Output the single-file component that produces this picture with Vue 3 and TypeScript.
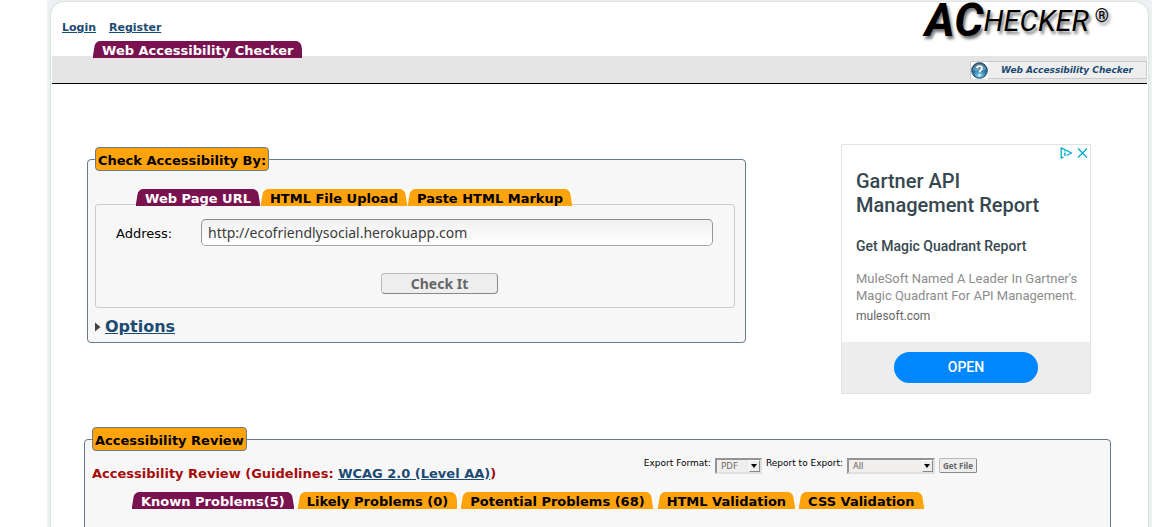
<script setup lang="ts">
import { ref } from 'vue'

const address = ref('http://ecofriendlysocial.herokuapp.com')
const inputTabs = ['Web Page URL', 'HTML File Upload', 'Paste HTML Markup']
const inputTab = ref(0)
const resultTabs = [
  'Known Problems(5)',
  'Likely Problems (0)',
  'Potential Problems (68)',
  'HTML Validation',
  'CSS Validation',
]
const resultTab = ref(0)
const format = ref('PDF')
const report = ref('All')
</script>

<template>
  <div class="backdrop">
    <div class="page">
      <header class="header">
        <div class="account">
          <nav class="links">
            <a href="#login">Login</a>
            <a href="#register">Register</a>
          </nav>
          <nav class="tabs site-tabs">
            <a class="tab active" href="#checker">Web Accessibility Checker</a>
          </nav>
        </div>
        <div class="logo"><b>AC</b><span>HECKER</span><sup>®</sup></div>
      </header>
      <div class="bar">
        <a class="help" href="#help">
          <svg width="17" height="17" viewBox="0 0 17 17" aria-hidden="true">
            <defs>
              <radialGradient id="orb" cx="0.5" cy="0.85" r="0.8">
                <stop offset="0" stop-color="#8fd6ee" />
                <stop offset="0.5" stop-color="#2f7fae" />
                <stop offset="1" stop-color="#12415f" />
              </radialGradient>
            </defs>
            <rect width="17" height="17" fill="#fff" />
            <circle cx="8.5" cy="8.5" r="7.8" fill="url(#orb)" stroke="#174866" />
            <path d="M1.800 8.500C1.800 4 5 1.400 8.500 1.400s6.700 2.600 6.700 6.100C11 9.500 6 9 1.800 8.500Z" fill="#fff" opacity="0.3" />
            <path d="M5.900 6.100C6.200 3.400 11 3.400 11 6c0 2-2.300 2.200-2.300 4.300" fill="none" stroke="#fff" stroke-width="1.800" />
            <circle cx="8.6" cy="13" r="1.1" fill="#fff" />
          </svg>
          <span>Web Accessibility Checker</span>
        </a>
      </div>

      <main>
        <section class="top-row">
          <fieldset class="group checker">
            <legend>Check Accessibility By:</legend>
            <div class="tabs input-tabs">
              <button
                v-for="(name, i) in inputTabs"
                :key="name"
                type="button"
                class="tab"
                :class="{ active: i === inputTab }"
                @click="inputTab = i"
              >{{ name }}</button>
            </div>
            <form class="panel" @submit.prevent>
              <div class="field">
                <label for="address">Address:</label>
                <input id="address" v-model="address" type="text" />
              </div>
              <div class="actions">
                <button type="submit">Check It</button>
              </div>
            </form>
            <div class="options">
              <svg width="6" height="10" viewBox="0 0 6 10" aria-hidden="true">
                <path d="M0 0.500 5.500 5 0 9.500Z" fill="#444" />
              </svg>
              <a href="#options">Options</a>
            </div>
          </fieldset>

          <aside class="ad">
            <div class="ad-marks">
              <svg width="13" height="12" viewBox="0 0 13 12" aria-hidden="true">
                <path d="M3.500 10 1.200 11.200V.8L11.500 6 6.500 8.500" fill="none" stroke="#00aecd" stroke-width="1.300" stroke-linejoin="round" />
                <path d="M4.900 3.600v1M4.900 5.400V9" stroke="#00aecd" stroke-width="1.400" />
              </svg>
              <svg width="11" height="12" viewBox="0 0 11 12" aria-hidden="true">
                <path d="m1 1.500 9 9M10 1.500l-9 9" stroke="#00aecd" stroke-width="1.300" />
              </svg>
            </div>
            <div class="ad-body">
              <h2>Gartner API Management Report</h2>
              <h3>Get Magic Quadrant Report</h3>
              <p>MuleSoft Named A Leader In Gartner's Magic Quadrant For API Management.</p>
              <small>mulesoft.com</small>
            </div>
            <div class="ad-foot"><button type="button">OPEN</button></div>
          </aside>
        </section>

        <fieldset class="group review">
          <legend>Accessibility Review</legend>
          <div class="review-head">
            <h1>Accessibility Review (Guidelines: <a href="#wcag">WCAG 2.0 (Level AA)</a>)</h1>
            <form class="export" @submit.prevent>
              <label for="format">Export Format:</label>
              <span class="drop small">
                <select id="format" v-model="format"><option>PDF</option></select>
                <i></i>
              </span>
              <label for="report">Report to Export:</label>
              <span class="drop large">
                <select id="report" v-model="report"><option>All</option></select>
                <i></i>
              </span>
              <button type="submit">Get File</button>
            </form>
          </div>
          <div class="tabs result-tabs">
            <button
              v-for="(name, i) in resultTabs"
              :key="name"
              type="button"
              class="tab"
              :class="{ active: i === resultTab }"
              @click="resultTab = i"
            >{{ name }}</button>
          </div>
        </fieldset>
      </main>
    </div>
  </div>
</template>

<style>
html {
  background: #fff;
  overflow: hidden;
}
</style>

<style scoped>
* {
  box-sizing: border-box;
}
.backdrop {
  margin: 0 17px 0 47px;
  padding: 2px 4px 0;
  background: #edf1f2;
  font: 13px/17px Verdana, "DejaVu Sans", sans-serif;
  color: #000;
}
.page {
  min-height: 100vh;
  background: #fff;
  border-radius: 13px 13px 0 0;
  box-shadow: 0 0 2px #b8bfc2;
  padding: 0 1px;
}
a {
  color: #1b4a72;
}
.header {
  display: flex;
  justify-content: space-between;
  height: 54px;
}
.links {
  display: flex;
  gap: 13px;
  padding: 17px 0 0 10px;
  font-size: 11px;
  font-weight: bold;
}
.tabs {
  display: flex;
  position: relative;
}
.site-tabs {
  padding: 5px 0 0 41px;
}
.tab {
  position: relative;
  isolation: isolate;
  height: 17px;
  padding: 2px 9px 0;
  border: 0;
  background: #fff;
  color: #000;
  font: bold 13px/16px Verdana, "DejaVu Sans", sans-serif;
  text-decoration: none;
  white-space: nowrap;
  overflow: hidden;
}
.tab::before,
.tab::after {
  content: "";
  position: absolute;
  z-index: -1;
  top: 0;
  bottom: 0;
  background: #ffa30d;
}
.tab::before {
  left: 1px;
  right: 40%;
  border-top-left-radius: 5px;
  transform: skewX(-9deg);
}
.tab::after {
  left: 40%;
  right: 1px;
  border-top-right-radius: 5px;
  transform: skewX(9deg);
}
.tab.active {
  color: #fff;
}
.tab.active::before,
.tab.active::after {
  background: #79124f;
}
.logo {
  display: flex;
  align-items: flex-start;
  padding-right: 38px;
  font-family: Roboto, sans-serif;
  font-style: italic;
  line-height: 36px;
  text-shadow: 2px 3px 3px #777;
}
.logo b {
  font-size: 46px;
}
.logo span {
  font-size: 29px;
  line-height: 38px;
}
.logo sup {
  padding-left: 6px;
  font-size: 18px;
  font-style: normal;
  line-height: 28px;
}
.bar {
  display: flex;
  justify-content: flex-end;
  align-items: flex-start;
  height: 28px;
  padding-top: 5px;
  background: #e5e5e5;
  border-bottom: 1px solid #000;
}
.help {
  display: flex;
  align-items: center;
  gap: 13px;
  height: 18px;
  padding-right: 13px;
  border: 1px solid #ccc;
  background: #eee;
  font-size: 9px;
  line-height: 18px;
  font-weight: bold;
  font-style: italic;
  text-decoration: none;
}
.top-row {
  display: flex;
  align-items: flex-start;
  gap: 95px;
  padding: 60px 56px 0 35px;
}
.group {
  min-width: 0;
  margin: 0;
  border: 1px solid #6b788e;
  border-radius: 4px;
  background: #f7f7f7;
}
legend {
  height: 24px;
  padding: 4px 2px 0;
  border: 1px solid #6e7b85;
  border-radius: 4px;
  background: #ffa30d;
  font-weight: bold;
}
.checker {
  flex: 1;
  margin-top: 3px;
  padding: 0 10px 5px 7px;
}
.input-tabs {
  z-index: 1;
  gap: 1px;
  padding: 18px 0 0 41px;
}
.panel {
  margin-top: -2px;
  padding: 14px 21px 13px 20px;
  border: 1px solid #ccc;
  border-radius: 3px;
}
.field {
  display: flex;
  align-items: center;
}
.field label {
  width: 85px;
  padding-top: 1px;
}
.field input {
  flex: 1;
  min-width: 0;
  height: 27px;
  padding: 0 6px 1px;
  border: 1px solid #999;
  border-color: #888 #999 #aaa;
  border-radius: 5px;
  background: linear-gradient(#f1f1f1, #fff);
  color: #3c3c3c;
  font: 14px "Noto Sans", sans-serif;
}
.actions {
  display: flex;
  justify-content: center;
  padding: 27px 0 0 50px;
}
.actions button {
  width: 117px;
  height: 21px;
  padding: 0;
  border: 1px solid;
  border-color: #bbb #888 #888 #bbb;
  border-radius: 4px;
  background: #eee;
  color: #666;
  font: bold 14px/18px "Noto Sans", sans-serif;
}
.options {
  display: flex;
  align-items: center;
  gap: 4px;
  padding-top: 9px;
  font-size: 16px;
  line-height: 20px;
  font-weight: bold;
}
.ad {
  width: 250px;
  flex: none;
  border: 1px solid #e3e3e3;
  font-family: Roboto, sans-serif;
}
.ad-marks {
  display: flex;
  justify-content: flex-end;
  gap: 4px;
  height: 15px;
  padding: 2px 2px 0;
}
.ad-body {
  height: 182px;
  padding: 9px 8px 0 14px;
}
.ad h2 {
  max-width: 200px;
  margin: 0;
  font-size: 20px;
  line-height: 24px;
  font-weight: 500;
  color: #37474f;
}
.ad h3 {
  margin: 20px 0 0;
  font-size: 14px;
  line-height: 18px;
  font-weight: 500;
  color: #37474f;
}
.ad p {
  margin: 15px 0 0;
  font-size: 13px;
  line-height: 17px;
  color: #8c8c8c;
}
.ad small {
  display: block;
  margin-top: 4px;
  font-size: 12px;
  line-height: 16px;
  color: #666;
}
.ad-foot {
  height: 51px;
  padding-top: 10px;
  background: #ededed;
  text-align: center;
}
.ad-foot button {
  width: 144px;
  height: 31px;
  padding-bottom: 2px;
  border: 0;
  border-radius: 16px;
  background: #0086ff;
  color: #fff;
  font: 500 14px Roboto, sans-serif;
}
.review {
  margin: 33px 36px 0 32px;
  padding: 0 7px 40px;
}
.review-head {
  display: flex;
  align-items: flex-start;
  justify-content: space-between;
  padding-right: 126px;
}
.review h1 {
  margin: 14px 0 0;
  font-size: 13px;
  line-height: 17px;
  color: #a50b0b;
}
.export {
  display: flex;
  align-items: flex-start;
  gap: 4px;
  padding-top: 6px;
  font-size: 9px;
  line-height: 13px;
}
.drop {
  position: relative;
  height: 16px;
}
.small {
  width: 47px;
}
.large {
  width: 88px;
}
.drop select {
  appearance: none;
  display: block;
  width: 100%;
  height: 16px;
  padding: 0 4px;
  border: 2px solid;
  border-color: #949494 #e0e0e0 #e0e0e0 #949494;
  border-radius: 0;
  background: #f0efee;
  color: #666;
  font: 9px/12px "Noto Sans", sans-serif;
}
.drop i {
  position: absolute;
  top: 2px;
  right: 2px;
  width: 11px;
  height: 12px;
  border: 1px solid;
  border-color: #fff #888 #888 #fff;
  background: #eee;
  pointer-events: none;
}
.drop i::after {
  content: "";
  position: absolute;
  top: 3px;
  left: 1px;
  border: 3px solid transparent;
  border-top: 4px solid #000;
}
.export button {
  width: 38px;
  height: 15px;
  padding: 0;
  border: 1px solid;
  border-color: #bbb #888 #888 #bbb;
  border-radius: 2px;
  background: #eee;
  color: #666;
  font: bold 8px/11px "Noto Sans", sans-serif;
}
.drop,
.export button {
  margin-top: 1px;
}
.result-tabs {
  gap: 4px;
  padding: 10px 0 0 40px;
}
</style>
